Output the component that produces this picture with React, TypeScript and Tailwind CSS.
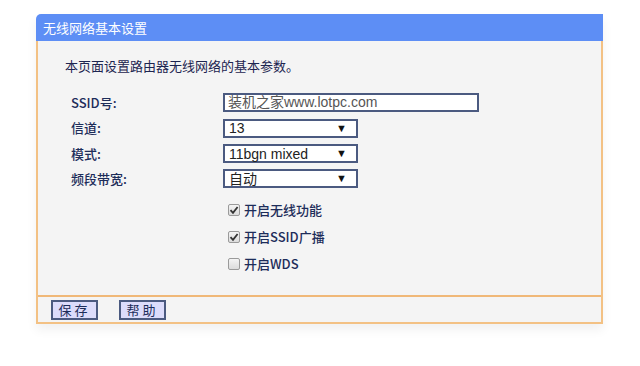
export default function App() {
  const cjk = { fontFamily: '"Noto Sans CJK SC", "Liberation Sans", sans-serif' }
  const latin = { fontFamily: '"Liberation Sans", "Noto Sans CJK SC", sans-serif' }

  const Select = ({ value }: { value: string }) => (
    <div className="w-[135px] h-[19px] border-2 border-[#4b5a80] bg-white flex items-center justify-between pl-[4px] pr-[9px] text-[14px] leading-none text-[#222]" style={latin}>
      <span>{value}</span>
      <span className="text-[11px] text-[#111]">▼</span>
    </div>
  )

  const Check = ({ checked, label }: { checked: boolean; label: string }) => (
    <div className="flex items-center gap-[4px] h-[27px]">
      <div className="w-[12px] h-[12px] border border-[#9a9a9a] rounded-[2px] bg-gradient-to-b from-[#f4f4f4] to-[#dcdcdc] flex items-center justify-center">
        {checked && (
          <svg width="10" height="10" viewBox="0 0 10 10">
            <path d="M1.5 5.2 L4 7.8 L8.6 2" stroke="#333" strokeWidth="1.8" fill="none" />
          </svg>
        )}
      </div>
      <span className="text-[13px] text-[#1d2d5a] font-medium">{label}</span>
    </div>
  )

  return (
    <div className="w-[640px] h-[366px] bg-white pt-[14px] pl-[36px]" style={cjk}>
      <div className="w-[567px] shadow-[0_6px_10px_rgba(0,0,0,0.06)]">
        <div className="h-[27px] bg-[#5d8ef5] rounded-tl-[5px] flex items-center pl-[7px] text-white text-[13px]">
          无线网络基本设置
        </div>
        <div className="bg-[#f4f4f4] border-x-2 border-[#f3c184]">
          <div className="h-[256px] border-b-2 border-[#f0b878] pt-[15px]">
            <div className="pl-[27px] text-[13px] text-[#1d2550] leading-[20px]">本页面设置路由器无线网络的基本参数。</div>
            <div className="flex mt-[14px] pl-[33px]">
              <div className="w-[152px] text-[13px] text-[#1d2d5a] font-medium">
                <div className="h-[25px] flex items-center">SSID号:</div>
                <div className="h-[26px] flex items-center">信道:</div>
                <div className="h-[25px] flex items-center">模式:</div>
                <div className="h-[25px] flex items-center">频段带宽:</div>
              </div>
              <div className="flex flex-col">
                <div className="h-[25px] flex items-center">
                  <div className="w-[256px] h-[19px] border-2 border-[#4b5a80] bg-white flex items-center pl-[3px] text-[14px] text-[#555]" style={latin}>
                    装机之家www.lotpc.com
                  </div>
                </div>
                <div className="h-[26px] flex items-center"><Select value="13" /></div>
                <div className="h-[25px] flex items-center"><Select value="11bgn mixed" /></div>
                <div className="h-[25px] flex items-center"><Select value="自动" /></div>
                <div className="pl-[5px] pt-[5px]">
                  <Check checked label="开启无线功能" />
                  <Check checked label="开启SSID广播" />
                  <Check checked={false} label="开启WDS" />
                </div>
              </div>
            </div>
          </div>
          <div className="h-[27px] flex items-center gap-[21px] pl-[13px] border-b-2 border-[#f3c184]">
            <button className="w-[47px] h-[20px] border-2 border-[#4b5a80] bg-[#dcdcfb] text-[13px] text-[#1d2d5a] tracking-[3px] leading-none">保存</button>
            <button className="w-[47px] h-[20px] border-2 border-[#4b5a80] bg-[#dcdcfb] text-[13px] text-[#1d2d5a] tracking-[3px] leading-none">帮助</button>
          </div>
        </div>
      </div>
    </div>
  )
}
